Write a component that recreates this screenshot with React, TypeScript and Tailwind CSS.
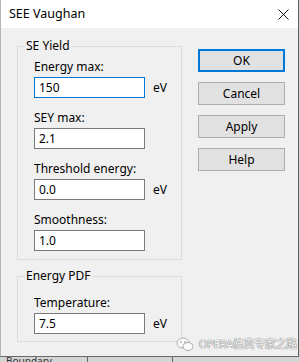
import React from "react";

const font = { fontFamily: '"Noto Sans", "Segoe UI", "Noto Sans CJK SC", sans-serif' };

function Field({ label, value, unit, focused, first }: { label: string; value: string; unit?: boolean; focused?: boolean; first?: boolean }) {
  return (
    <div className={first ? "" : "mt-[12px]"}>
      <div className="h-[16px] leading-[16px] text-[12px] text-black">{label}</div>
      <div className="mt-[2px] flex items-center">
        <div
          className={`w-[111px] h-[21px] bg-white border pl-[4px] flex items-center text-[12px] text-black ${focused ? "border-[#0078d7]" : "border-[#7a7a7a]"}`}
        >
          {value}
        </div>
        {unit && <span className="ml-[8px] text-[12px] text-black leading-none">eV</span>}
      </div>
    </div>
  );
}

function Btn({ label, primary, first }: { label: string; primary?: boolean; first?: boolean }) {
  return (
    <div
      className={`w-[87px] h-[23px] flex items-center justify-center bg-[#e1e1e1] text-[12px] text-black ${primary ? "border-2 border-[#0078d7]" : "border border-[#adadad]"} ${first ? "" : "mt-[10px]"}`}
    >
      {label}
    </div>
  );
}

export default function App() {
  return (
    <div className="relative w-[300px] h-[362px] bg-[#d4d4d4] overflow-hidden" style={font}>
      <div className="w-[299px] h-[357px] bg-[#f0f0f0] border-l border-[#b4b4b4] border-r border-r-[#5f5f5f] border-b border-b-[#6a6a6a] flex flex-col">
        <div className="h-[28px] bg-white flex items-center justify-between pl-[8px] pr-[8px]">
          <span className="text-[12.5px] text-black">SEE Vaughan</span>
          <svg width="11" height="11" viewBox="0 0 11 11" className="mr-[1px]">
            <path d="M0.5 0.5 L10.5 10.5 M10.5 0.5 L0.5 10.5" stroke="#111" strokeWidth="1" fill="none" />
          </svg>
        </div>
        <div className="flex pl-[16px]">
          <div className="flex flex-col">
            <fieldset className="mt-[10px] w-[165px] border border-[#dcdcdc] pb-[8px]">
              <legend className="ml-[7px] px-[1px] text-[12px] leading-[16px] text-black">SE Yield</legend>
              <div className="pt-[5px] pl-[16px]">
                <Field label="Energy max:" value="150" unit focused first />
                <Field label="SEY max:" value="2.1" />
                <Field label="Threshold energy:" value="0.0" unit />
                <Field label="Smoothness:" value="1.0" />
              </div>
            </fieldset>
            <fieldset className="mt-[8px] w-[165px] border border-[#dcdcdc] pb-[7px]">
              <legend className="ml-[7px] px-[1px] text-[12px] leading-[16px] text-black">Energy PDF</legend>
              <div className="pt-[11px] pl-[16px]">
                <Field label="Temperature:" value="7.5" unit first />
              </div>
            </fieldset>
          </div>
          <div className="ml-[16px] mt-[21px] flex flex-col">
            <Btn label="OK" primary first />
            <Btn label="Cancel" />
            <Btn label="Apply" />
            <Btn label="Help" />
          </div>
        </div>
      </div>
      <div className="flex h-[5px] text-[10px] leading-[8px] text-[#333]">
        <div className="w-[88px] border-r border-[#666] pl-[6px] overflow-hidden">Boundary</div>
        <div className="w-[85px] border-r border-[#666]"></div>
      </div>
      <div className="absolute left-[176px] top-[336px] flex items-center">
        <svg width="18" height="15" viewBox="0 0 18 15">
          <ellipse cx="7" cy="6" rx="6" ry="5" fill="#fafafa" stroke="#9a9a9a" strokeWidth="0.8" />
          <ellipse cx="12" cy="9.5" rx="5" ry="4" fill="#fafafa" stroke="#9a9a9a" strokeWidth="0.8" />
          <circle cx="5" cy="5" r="0.8" fill="#8a8a8a" />
          <circle cx="9" cy="5" r="0.8" fill="#8a8a8a" />
        </svg>
        <span
          className="ml-[5px] text-[11px] text-[#f7f7f7] tracking-[-0.3px]"
          style={{ textShadow: "0 0 1px #666, 0 0 1px #666" }}
        >
          OPERA仿真专家之路
        </span>
      </div>
    </div>
  );
}
